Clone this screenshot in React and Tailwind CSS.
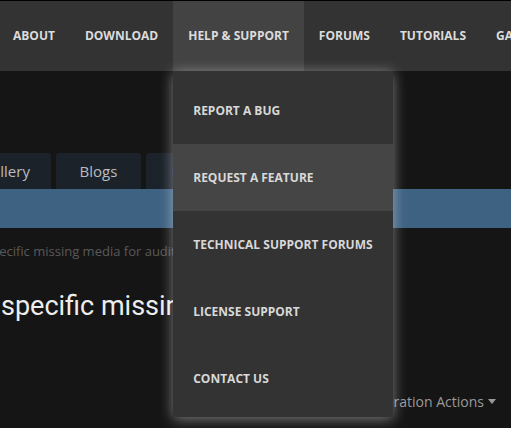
import { useState } from "react";

const navItems = ["ABOUT", "DOWNLOAD", "HELP & SUPPORT", "FORUMS", "TUTORIALS", "GALLERY"];

const helpLinks = [
  "REPORT A BUG",
  "REQUEST A FEATURE",
  "TECHNICAL SUPPORT FORUMS",
  "LICENSE SUPPORT",
  "CONTACT US",
];

const tabs = ["Gallery", "Blogs", "Issues"];

const App = () => {
  const [hovered, setHovered] = useState("REQUEST A FEATURE");

  return (
    <div
      className="relative w-[511px] h-[428px] overflow-hidden bg-[#151515]"
      style={{ fontFamily: '"Open Sans", "Liberation Sans", sans-serif' }}
    >
      {/* top nav */}
      <div className="h-[71px] border-t border-black bg-[#333333] flex whitespace-nowrap">
        <div className="flex -ml-[2px]">
          {navItems.map((item) => {
            const active = item === "HELP & SUPPORT";
            return (
              <div
                key={item}
                className={`relative flex items-center px-[15px] text-[12px] font-bold text-[#dcdcdc] ${
                  active ? "bg-[#434343]" : ""
                }`}
              >
                {item}

                {active && (
                  <div className="absolute left-0 top-[70px] w-[220px] pt-[6px] pb-[5px] bg-[#333333] rounded-b-[3px] shadow-[0_2px_14px_rgba(255,255,255,0.45)] z-10">
                    {helpLinks.map((link) => (
                      <div
                        key={link}
                        onMouseEnter={() => setHovered(link)}
                        className={`h-[67px] flex items-center pl-[20px] text-[12px] font-bold text-[#d8d8d8] ${
                          hovered === link ? "bg-[#454545]" : ""
                        }`}
                      >
                        {link}
                      </div>
                    ))}
                  </div>
                )}
              </div>
            );
          })}
        </div>
      </div>

      {/* page content (dimmed) */}
      <div className="pt-[82px] whitespace-nowrap">
        <div className="flex gap-[5px] -ml-[34px]">
          {tabs.map((t, i) => (
            <div
              key={t}
              className={`w-[85px] h-[36px] rounded-t-[3px] bg-[#1c222a] flex items-center justify-center text-[15px] text-[#b9bcc0] ${
                i === 0 ? "pr-[6px]" : ""
              } ${i === 2 ? "pl-[10px]" : ""}`}
            >
              {t}
            </div>
          ))}
        </div>
        <div className="h-[39px] bg-[#3e6282]"></div>

        <p className="mt-[13px] -ml-[15px] text-[13px] leading-[20px] text-[#595959]">
          specific missing media for auditing
        </p>

        <h1
          className="mt-[30px] pl-[1px] text-[27px] leading-[30px] text-[#ededed]"
          style={{ fontFamily: "Roboto, 'Liberation Sans', sans-serif" }}
        >
          specific missing media
        </h1>

        <div className="mt-[70px] flex justify-end pr-[15px] items-center gap-[4px] text-[14px] text-[#9a9a9a]">
          <span>Moderation Actions</span>
          <svg width="8" height="5" viewBox="0 0 8 5">
            <path d="M0 0 L8 0 L4 5 Z" fill="#9a9a9a" />
          </svg>
        </div>
      </div>
    </div>
  );
};

export default App;
